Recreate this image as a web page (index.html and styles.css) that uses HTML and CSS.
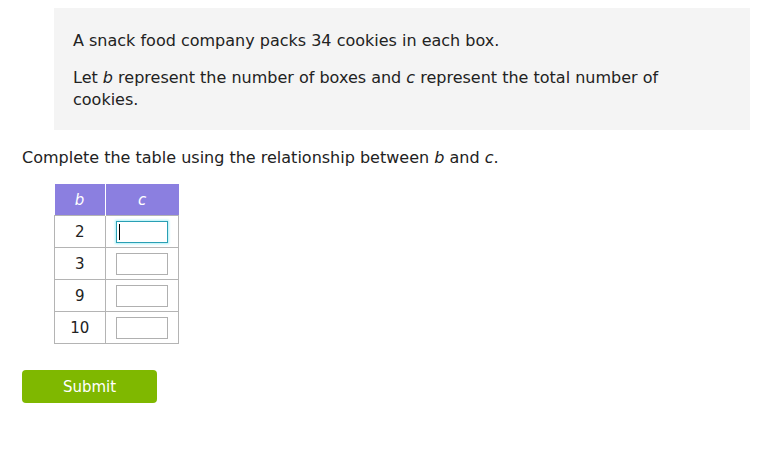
FILE: index.html
```html
<!DOCTYPE html>
<html>
<head>
<meta charset="utf-8">
<link rel="stylesheet" href="styles.css">
</head>
<body>
<div class="page">
  <div class="question">
    <p class="line">A snack food company packs 34 cookies in each box.</p>
    <p class="line">Let <i>b</i> represent the number of boxes and <i>c</i> represent the total number of cookies.</p>
  </div>
  <p class="prompt">Complete the table using the relationship between <i>b</i> and <i>c</i>.</p>
  <table class="grid">
    <thead>
      <tr><th class="col-b"><i>b</i></th><th class="col-c"><i>c</i></th></tr>
    </thead>
    <tbody>
      <tr><td>2</td><td><span class="box focus"><span class="caret"></span></span></td></tr>
      <tr><td>3</td><td><span class="box"></span></td></tr>
      <tr><td>9</td><td><span class="box"></span></td></tr>
      <tr><td>10</td><td><span class="box"></span></td></tr>
    </tbody>
  </table>
  <button class="submit">Submit</button>
</div>
</body>
</html>
```
FILE: styles.css
```css
html, body {
  margin: 0;
  padding: 0;
  background: #fff;
}
body {
  font-family: "DejaVu Sans", Verdana, sans-serif;
  font-size: 16px;
  color: #222;
}
.page {
  padding: 8px 0 0 22px;
}
.question {
  margin-left: 32px;
  width: 696px;
  background: #f4f4f4;
  padding: 22px 19px 10px 19px;
  box-sizing: border-box;
  height: 122px;
}
.line {
  margin: 0 0 15px 0;
  line-height: 22px;
  width: 620px;
}
.prompt {
  margin: 17px 0 15px 0;
  line-height: 22px;
}
.grid {
  margin-left: 32px;
  border-collapse: collapse;
  font-size: 15px;
}
.grid th {
  background: #8b7fe0;
  color: #fff;
  font-weight: normal;
  height: 31px;
  padding: 0;
  border-left: 1px solid #fff;
}
.grid th:first-child {
  border-left: none;
}
.col-b { width: 50px; }
.col-c { width: 73px; }
.grid td {
  border: 1px solid #b4b4b4;
  height: 31px;
  padding: 0;
  text-align: center;
}
.box {
  display: inline-block;
  width: 50px;
  height: 20px;
  border: 1px solid #b0b0b0;
  vertical-align: middle;
  position: relative;
}
.box.focus {
  border-color: #2a9fb4;
  box-shadow: 0 0 2px 1px #aef0f7;
}
.caret {
  position: absolute;
  left: 2px;
  top: 2px;
  width: 1px;
  height: 16px;
  background: #000;
}
.submit {
  display: block;
  margin-top: 26px;
  width: 135px;
  height: 33px;
  border: none;
  border-radius: 4px;
  background: #7fb800;
  color: #fff;
  font-family: "DejaVu Sans", Verdana, sans-serif;
  font-size: 15px;
  padding: 0;
}
```
